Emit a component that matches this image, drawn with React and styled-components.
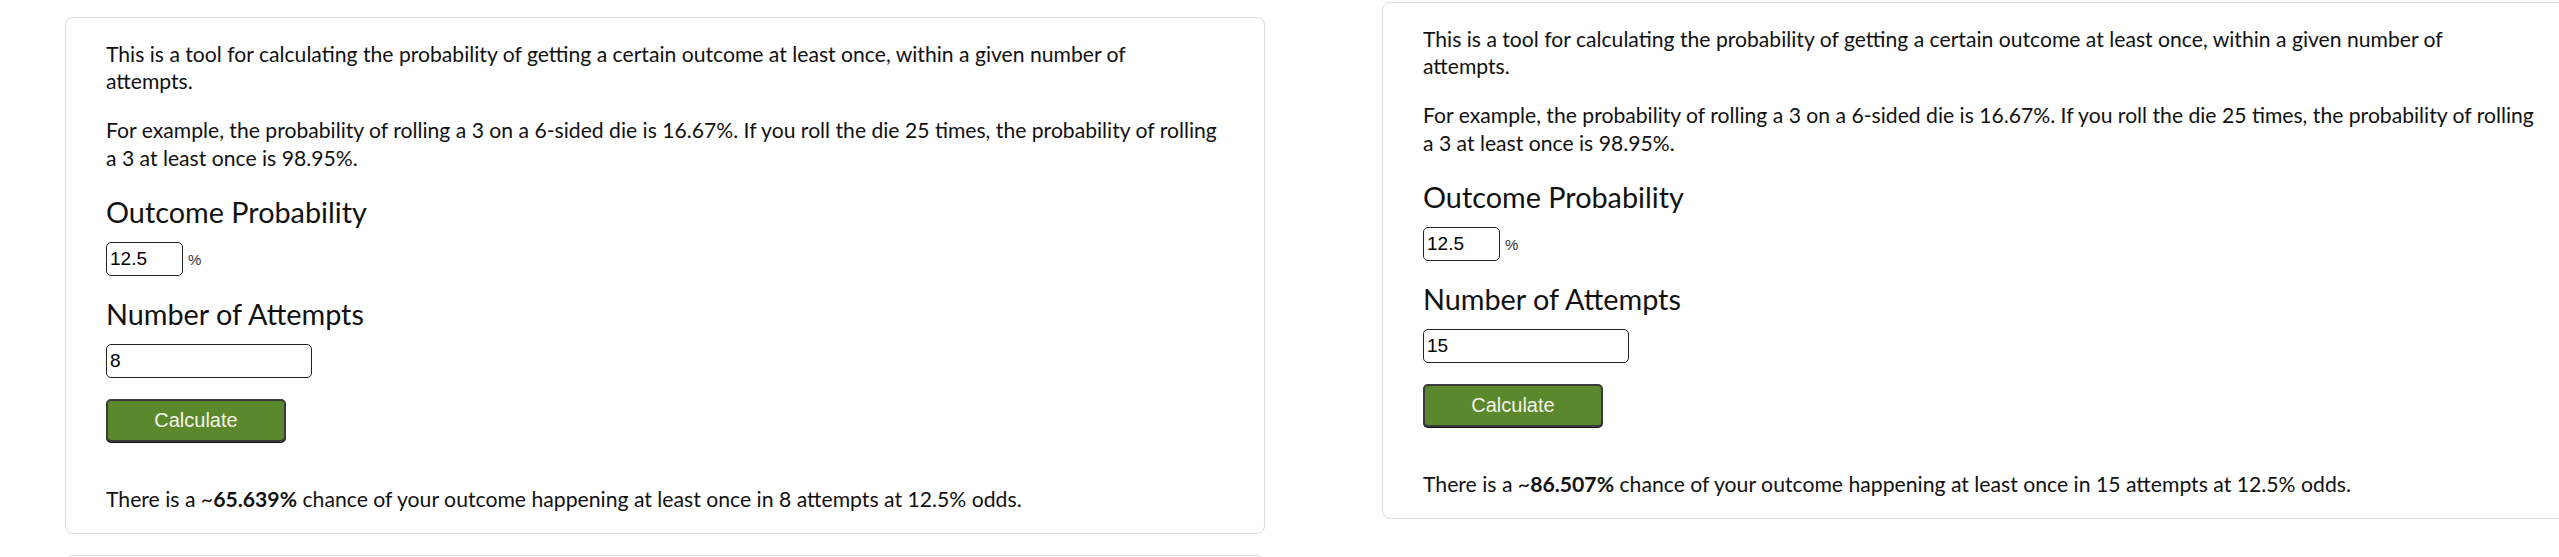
import React, { useState } from 'react';
import styled, { createGlobalStyle } from 'styled-components';

const GlobalStyle = createGlobalStyle`
  html, body {
    margin: 0;
    padding: 0;
    overflow: hidden;
    background: #fff;
  }
  body {
    font-family: Lato, "Noto Sans", sans-serif;
    color: #111;
  }
`;

const Page = styled.div`
  display: flex;
  align-items: flex-start;
  gap: 117px;
  padding-left: 65px;
  width: max-content;
`;

const Column = styled.div`
  display: flex;
  flex-direction: column;
  gap: 21px;
  width: 1200px;
  flex-shrink: 0;
  padding-top: ${(p) => p.$top}px;
`;

const Card = styled.div`
  box-sizing: border-box;
  display: flex;
  flex-direction: column;
  align-items: flex-start;
  border: 1px solid #dcdcdc;
  border-radius: 8px;
  padding: 22.5px 40px 20px;
  min-height: ${(p) => p.$minHeight || 0}px;
`;

const Intro = styled.p`
  margin: 0;
  font-size: 21.15px;
  line-height: 27.7px;

  & + & {
    margin-top: 21px;
  }
`;

const Heading = styled.h2`
  margin: ${(p) => p.$top}px 0 0;
  font-size: 28.8px;
  font-weight: 400;
  line-height: 33.6px;
`;

const InputRow = styled.div`
  display: flex;
  align-items: baseline;
  gap: 5px;
  margin-top: 12px;
`;

const NumberInput = styled.input`
  box-sizing: border-box;
  width: ${(p) => p.$width}px;
  height: 34px;
  padding: 0 3px;
  border: 1px solid #222;
  border-radius: 5px;
  font-family: "Liberation Sans", Arial, sans-serif;
  font-size: 19px;
  color: #000;
  outline: none;
`;

const Unit = styled.span`
  font-family: "Liberation Sans", Arial, sans-serif;
  font-size: 15px;
  color: #333;
`;

const CalcButton = styled.button`
  box-sizing: border-box;
  width: 180px;
  height: 43px;
  margin-top: 21px;
  background: #5b872d;
  color: #f4f4e6;
  border: 2px solid #3b3b3b;
  border-radius: 5px;
  box-shadow: 0 1px 0 #111;
  font-family: "Liberation Sans", Arial, sans-serif;
  font-size: 20px;
  cursor: pointer;
`;

const Result = styled.p`
  margin: 44px 0 0;
  font-size: 21.2px;
  line-height: 27.7px;

  strong {
    font-weight: 700;
  }
`;

const chance = (p, n) => (1 - Math.pow(1 - p / 100, n)) * 100;

const Calculator = ({ initialAttempts }) => {
  const [prob, setProb] = useState('12.5');
  const [attempts, setAttempts] = useState(String(initialAttempts));
  const [result, setResult] = useState({ p: 12.5, n: initialAttempts });

  const handleCalc = () => {
    setResult({ p: parseFloat(prob), n: parseInt(attempts, 10) });
  };

  return (
    <Card>
      <Intro>
        This is a tool for calculating the probability of getting a certain outcome at least once,
        within a given number of
        <br />
        attempts.
      </Intro>
      <Intro>
        For example, the probability of rolling a 3 on a 6-sided die is 16.67%. If you roll the die
        25 times, the probability of rolling a 3 at least once is 98.95%.
      </Intro>
      <Heading $top={24}>Outcome Probability</Heading>
      <InputRow>
        <NumberInput $width={77} value={prob} onChange={(e) => setProb(e.target.value)} />
        <Unit>%</Unit>
      </InputRow>
      <Heading $top={22}>Number of Attempts</Heading>
      <InputRow>
        <NumberInput $width={206} value={attempts} onChange={(e) => setAttempts(e.target.value)} />
      </InputRow>
      <CalcButton onClick={handleCalc}>Calculate</CalcButton>
      <Result>
        There is a ~<strong>{chance(result.p, result.n).toFixed(3)}%</strong> chance of your outcome
        happening at least once in {result.n} attempts at {result.p}% odds.
      </Result>
    </Card>
  );
};

const App = () => (
  <>
    <GlobalStyle />
    <Page>
      <Column $top={17}>
        <Calculator initialAttempts={8} />
        <Card $minHeight={120} />
      </Column>
      <Column $top={2}>
        <Calculator initialAttempts={15} />
      </Column>
    </Page>
  </>
);

export default App;
